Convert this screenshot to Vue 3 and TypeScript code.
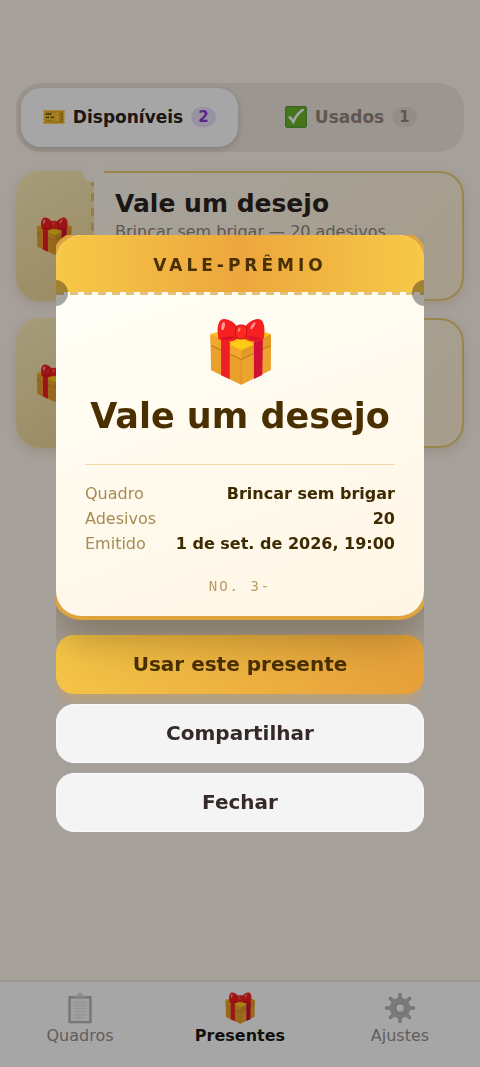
<script setup lang="ts">
import { ref } from 'vue'

interface Gift {
  id: number
  title: string
  detail: string
}

const gifts: Gift[] = [
  { id: 3, title: 'Vale um desejo', detail: 'Brincar sem brigar — 20 adesivos' },
  { id: 2, title: 'Vale um desejo', detail: 'Brincar sem brigar — 20 adesivos' },
]

const rows = [
  { label: 'Quadro', value: 'Brincar sem brigar' },
  { label: 'Adesivos', value: '20' },
  { label: 'Emitido', value: '1 de set. de 2026, 19:00' },
]

const open = ref(true)
const tab = ref<'available' | 'used'>('available')
</script>

<template>
  <svg class="defs" aria-hidden="true">
    <symbol id="gift" viewBox="50 54 200 200">
      <path d="M60 104 L152 84 L241 104 L240 209 L152 253 L62 210 Z" fill="#eaa12c" />
      <path d="M152 146 L241 104 L240 209 L152 253 Z" fill="#eda42e" />
      <path d="M60 102 L152 76 L241 102 L152 148 Z" fill="#fcc21b" />
      <path d="M60 103 L152 146 L152 180 L62 136 Z" fill="#f2a62c" />
      <path d="M152 146 L241 103 L240 136 L152 180 Z" fill="#e59a25" />
      <path d="M62 136 L152 178 L240 136" fill="none" stroke="#c27a20" stroke-width="3" />
      <path d="M152 180 V252" stroke="#d58b20" stroke-width="2" />
      <path d="M92 112 L118 124 V237 L92 225 Z" fill="#ee2025" />
      <path d="M190 124 L217 112 L215 224 L190 236 Z" fill="#d20f35" />
      <path d="M118 133 L152 119 L190 133 L152 150 Z" fill="#ffcb14" />
      <path d="M84 116 C80 92 80 72 91 60 C103 50 133 65 141 82 V116 C124 127 99 128 84 116 Z" fill="#f5201f" />
      <path d="M219 116 C224 92 222 68 212 60 C198 50 172 66 162 82 V116 C178 127 205 128 219 116 Z" fill="#f5201f" />
      <path d="M90 117 Q112 106 134 111 Q112 125 90 117 Z" fill="#d81226" />
      <path d="M214 117 Q192 106 170 111 Q192 125 214 117 Z" fill="#d81226" />
      <path d="M138 79 Q152 71 166 79 Q172 95 165 113 Q152 121 138 113 Q131 96 138 79 Z" fill="#fb2a20" stroke="#c91422" stroke-width="3" />
      <ellipse cx="98" cy="78" rx="5" ry="12" transform="rotate(12 98 78)" fill="#ff9b99" />
      <ellipse cx="187" cy="77" rx="4" ry="12" transform="rotate(32 187 77)" fill="#ff9b99" />
      <ellipse cx="146" cy="89" rx="3" ry="7" transform="rotate(18 146 89)" fill="#ff8f87" />
    </symbol>
  </svg>

  <div class="app">
    <main class="page">
      <div class="tabs" role="tablist">
        <button class="tab" :class="{ active: tab === 'available' }" role="tab" :aria-selected="tab === 'available'" @click="tab = 'available'">
          <svg class="tab-icon" viewBox="0 0 66 66" aria-hidden="true">
            <path d="M1 13 H65 V21 Q60 24 65 27 V31 Q60 33 65 36 V40 Q60 43 65 46 V53 H1 V46 Q6 43 1 40 V34 Q6 32 1 29 V22 Q6 20 1 17 Z" fill="#fbc02d" />
            <path d="M6 18 H48 M6 48 H48" stroke="#d99a20" stroke-width="2" />
            <path d="M8 24 H26 M8 34 H18 M23 34 H33" stroke="#40351c" stroke-width="4" stroke-dasharray="5 1" />
            <path d="M9 43 H31" stroke="#d99a20" stroke-width="3" />
            <path d="M49 15 V52" stroke="#c98b19" stroke-width="2" stroke-dasharray="4 3" />
            <path d="M56 20 V48" stroke="#765518" stroke-width="6" stroke-dasharray="3 3" />
            <path d="M43 20 V48" stroke="#fff2bb" stroke-width="4" stroke-dasharray="4 6" />
          </svg>
          <span>Disponíveis</span><span class="count">2</span>
        </button>
        <button class="tab" :class="{ active: tab === 'used' }" role="tab" :aria-selected="tab === 'used'" @click="tab = 'used'">
          <svg class="tab-icon" viewBox="0 0 66 66" aria-hidden="true">
            <rect x="2" y="2" width="62" height="62" rx="3" fill="#69b52c" stroke="#498d27" stroke-width="3" />
            <path d="M14 34 Q19 38 25 47 Q36 23 53 12" fill="none" stroke="#fff" stroke-width="8" stroke-linecap="round" />
          </svg>
          <span>Usados</span><span class="count">1</span>
        </button>
      </div>

      <article v-for="gift in gifts" :key="gift.id" class="card">
        <div class="stub"><svg class="card-icon" aria-hidden="true"><use href="#gift" /></svg></div>
        <div class="card-body">
          <h2>{{ gift.title }}</h2>
          <p>{{ gift.detail }}</p>
        </div>
      </article>
    </main>

    <nav class="nav">
      <a href="#quadros">
        <svg class="nav-icon muted" viewBox="0 0 96 96" aria-hidden="true">
          <rect x="13" y="12" width="70" height="82" rx="3" fill="#858585" />
          <rect x="20" y="20" width="56" height="67" fill="#f1f1f1" />
          <path d="M29 18 V11 H39 Q41 2 48 2 Q55 2 57 11 H67 V18 Z" fill="#a9a9a9" />
          <circle cx="48" cy="8" r="3" fill="#eee" />
          <path d="M30 32 H67 M30 41 H67 M30 50 H67 M30 59 H67 M30 68 H67 M30 77 H58" stroke="#b5b5b5" stroke-width="2" />
        </svg>
        <span>Quadros</span>
      </a>
      <a href="#presentes" class="current" aria-current="page">
        <svg class="nav-icon" aria-hidden="true"><use href="#gift" /></svg>
        <span>Presentes</span>
      </a>
      <a href="#ajustes">
        <svg class="nav-icon muted" viewBox="0 0 96 96" aria-hidden="true">
          <g stroke="#8e8e8e" stroke-width="12" stroke-linecap="round">
            <path d="M48 8 V88 M8 48 H88 M20 20 L76 76 M76 20 L20 76" />
          </g>
          <circle cx="48" cy="48" r="31" fill="#8e8e8e" />
          <circle cx="50" cy="49" r="16" fill="#a8a8a8" stroke="#777" stroke-width="3" />
          <circle cx="48" cy="48" r="10" fill="#fff" />
        </svg>
        <span>Ajustes</span>
      </a>
    </nav>

    <div v-if="open" class="overlay">
      <div class="dialog" role="dialog" aria-modal="true" aria-labelledby="gift-title">
        <section class="ticket">
          <header class="ticket-head">VALE-PRÊMIO</header>
          <div class="ticket-body">
            <svg class="ticket-icon" aria-hidden="true"><use href="#gift" /></svg>
            <h1 id="gift-title">Vale um desejo</h1>
            <dl>
              <div v-for="row in rows" :key="row.label" class="row">
                <dt>{{ row.label }}</dt>
                <dd>{{ row.value }}</dd>
              </div>
            </dl>
            <p class="serial">NO. 3-</p>
          </div>
        </section>
        <button class="action primary">Usar este presente</button>
        <button class="action">Compartilhar</button>
        <button class="action" @click="open = false">Fechar</button>
      </div>
    </div>
  </div>
</template>

<style>
body {
  margin: 0;
  background: #fff6ed;
}
</style>

<style scoped>
* {
  box-sizing: border-box;
}
.defs {
  position: absolute;
  width: 0;
  height: 0;
}
.app {
  min-height: 100vh;
  display: flex;
  flex-direction: column;
  background: #fff6ed;
  color: #2c2420;
  font-family: "DejaVu Sans", sans-serif;
}
button {
  border: 0;
  font: inherit;
  color: inherit;
  cursor: pointer;
}
h1, h2, p, dl, dd {
  margin: 0;
}
.page {
  flex: 1;
  padding: 83px 16px 16px;
}
.tabs {
  display: grid;
  grid-template-columns: 1fr 1fr;
  gap: 5px;
  padding: 5px;
  margin-bottom: 19px;
  border-radius: 25px;
  background: #efe6dd;
}
.tab {
  display: flex;
  align-items: center;
  justify-content: center;
  gap: 8px;
  height: 59px;
  padding: 0 0 2px;
  border-radius: 20px;
  background: transparent;
  color: #95847c;
  font-size: 17px;
  font-weight: 700;
}
.tab.active {
  background: #fff;
  color: #2c2420;
  box-shadow: 0 2px 6px rgba(60, 40, 20, 0.2);
}
.tab-icon {
  width: 22px;
  height: 22px;
}
.count {
  min-width: 24px;
  padding: 0 7px;
  border-radius: 10px;
  background: #e4d8d0;
  font-size: 15px;
  line-height: 20px;
}
.active .count {
  background: #ebe0fa;
  color: #8a3fd0;
}
.card {
  position: relative;
  display: flex;
  height: 130px;
  margin-bottom: 17px;
  border-radius: 24px;
  box-shadow: 0 4px 12px rgba(120, 80, 20, 0.14);
}
.card::before {
  content: "";
  position: absolute;
  top: -11px;
  left: 66px;
  width: 22px;
  height: 22px;
  border-radius: 50%;
  background: #fff6ed;
}
.stub {
  display: flex;
  align-items: center;
  justify-content: center;
  width: 78px;
  padding-right: 3px;
  border-radius: 24px 0 0 24px;
  background:
    repeating-linear-gradient(180deg, transparent 0 7px, #e6c466 7px 17px) right top / 3px 15px repeat-y,
    linear-gradient(150deg, #fff0bc, #edd596);
}
.card-icon {
  width: 38px;
  height: 38px;
}
.card-body {
  flex: 1;
  padding: 16px 21px;
  border: 2px solid #eace78;
  border-left: 0;
  border-radius: 0 24px 24px 0;
  background: linear-gradient(135deg, #fffaf0, #fff1d5);
}
.card-body h2 {
  font-size: 25px;
  line-height: 29px;
}
.card-body p {
  margin-top: 4px;
  color: #95847c;
  font-size: 16px;
  line-height: 20px;
}
.nav {
  display: grid;
  grid-template-columns: repeat(3, 1fr);
  height: 87px;
  padding-top: 10px;
  border-top: 2px solid #efe6dd;
  background: #fff;
}
.nav a {
  display: flex;
  flex-direction: column;
  align-items: center;
  gap: 2px;
  color: #95908c;
  font-size: 16px;
  line-height: 20px;
  text-decoration: none;
}
.nav a.current {
  color: #1d1a18;
  font-weight: 700;
}
.nav-icon {
  width: 32px;
  height: 32px;
}
.muted {
  opacity: 0.6;
}
.overlay {
  position: fixed;
  inset: 0;
  display: flex;
  align-items: center;
  justify-content: center;
  padding: 24px 56px;
  background: rgba(0, 0, 0, 0.35);
}
.dialog {
  flex: 1;
  max-width: 420px;
  max-height: 100%;
  display: flex;
  flex-direction: column;
  gap: 10px;
  overflow: hidden;
}
.ticket {
  position: relative;
  margin-bottom: 9px;
  border-radius: 25px;
  background: linear-gradient(160deg, #fffff8, #fff6e5);
  box-shadow: 0 0 0 4px #dfa43c, 0 20px 48px rgba(60, 35, 0, 0.4);
  text-align: center;
  color: #4a3000;
}
.ticket::before,
.ticket::after {
  content: "";
  position: absolute;
  top: 45px;
  width: 26px;
  height: 26px;
  border-radius: 50%;
  background: rgba(0, 0, 0, 0.35);
}
.ticket::before {
  left: -14px;
}
.ticket::after {
  right: -14px;
}
.ticket-head {
  padding: 19px 0 18px;
  border-radius: 25px 25px 0 0;
  background:
    repeating-linear-gradient(90deg, #e2c17c 0 8px, #fffdf2 8px 14px) left bottom / 14px 3px repeat-x,
    linear-gradient(90deg, #f7c948, #eca63d 50%, #f7c948);
  font-size: 17px;
  font-weight: 700;
  line-height: 23px;
  letter-spacing: 4px;
}
.ticket-body {
  padding: 23px 29px 20px;
}
.ticket-icon {
  display: block;
  width: 67px;
  height: 67px;
  margin: 0 auto 10px;
}
h1 {
  font-size: 35px;
  line-height: 42px;
  white-space: nowrap;
}
dl {
  margin-top: 27px;
  padding-top: 16px;
  border-top: 1px solid #f6d5a7;
}
.row {
  display: flex;
  justify-content: space-between;
  font-size: 16px;
  line-height: 25px;
}
dt {
  color: #a58b55;
}
dd {
  font-weight: 700;
  color: #3d2a00;
}
.serial {
  margin-top: 20px;
  color: #b89c62;
  font-family: "DejaVu Sans Mono", monospace;
  font-size: 14px;
  line-height: 20px;
  letter-spacing: 2px;
}
.action {
  flex: none;
  height: 59px;
  padding: 0 0 2px;
  border: 1px solid #fafafa;
  border-radius: 18px;
  background: #f4f4f4;
  color: #352a28;
  font-size: 20px;
  font-weight: 700;
}
.action.primary {
  border: 0;
  background: linear-gradient(135deg, #f7c948, #e79f3a);
  box-shadow: 0 5px 14px rgba(230, 160, 50, 0.4);
  color: #4a3000;
}
</style>
